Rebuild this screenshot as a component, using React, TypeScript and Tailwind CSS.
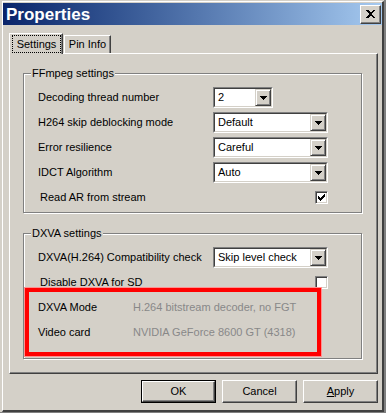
import React from "react";

function DropButton() {
  return (
    <div className="w-[16px] h-full flex items-center justify-center bg-[#d4d0c8] border border-t-[#d4d0c8] border-l-[#d4d0c8] border-r-[#404040] border-b-[#404040] shadow-[inset_1px_1px_0_#fff,inset_-1px_-1px_0_#808080]">
      <svg width="7" height="4" viewBox="0 0 7 4" shapeRendering="crispEdges">
        <rect x="0" y="0" width="7" height="1" fill="#000" />
        <rect x="1" y="1" width="5" height="1" fill="#000" />
        <rect x="2" y="2" width="3" height="1" fill="#000" />
        <rect x="3" y="3" width="1" height="1" fill="#000" />
      </svg>
    </div>
  );
}

function Combo({ value, w }: { value: string; w: string }) {
  return (
    <div className={`flex h-[21px] ${w} border border-t-[#808080] border-l-[#808080] border-r-white border-b-white`}>
      <div className="flex-1 flex bg-white border border-t-[#404040] border-l-[#404040] border-r-[#d4d0c8] border-b-[#d4d0c8]">
        <span className="flex-1 pl-[3px] leading-[17px] text-black">{value}</span>
        <DropButton />
      </div>
    </div>
  );
}

function Checkbox({ checked }: { checked?: boolean }) {
  return (
    <div className="w-[13px] h-[13px] bg-white border border-t-[#808080] border-l-[#808080] border-r-white border-b-white shadow-[inset_1px_1px_0_#404040,inset_-1px_-1px_0_#d4d0c8] flex items-center justify-center">
      {checked && (
        <svg width="7" height="7" viewBox="0 0 7 7" shapeRendering="crispEdges">
          <rect x="0" y="2" width="1" height="3" fill="#000" />
          <rect x="1" y="3" width="1" height="3" fill="#000" />
          <rect x="2" y="4" width="1" height="3" fill="#000" />
          <rect x="3" y="3" width="1" height="3" fill="#000" />
          <rect x="4" y="2" width="1" height="3" fill="#000" />
          <rect x="5" y="1" width="1" height="3" fill="#000" />
          <rect x="6" y="0" width="1" height="3" fill="#000" />
        </svg>
      )}
    </div>
  );
}

function Button({ children, def }: { children: React.ReactNode; def?: boolean }) {
  const inner = (
    <div className="w-full h-full flex items-center justify-center bg-[#d4d0c8] border border-t-white border-l-white border-r-[#404040] border-b-[#404040] shadow-[inset_-1px_-1px_0_#808080] text-black">
      {children}
    </div>
  );
  if (def) {
    return <div className="w-[75px] h-[23px] border border-black">{inner}</div>;
  }
  return <div className="w-[75px] h-[23px]">{inner}</div>;
}

function Row({ children }: { children: React.ReactNode }) {
  return <div className="flex items-center h-[25px] pl-[14px]">{children}</div>;
}

function Group({ title, h, children, extra }: { title: string; h: string; children: React.ReactNode; extra?: string }) {
  return (
    <div className={`relative w-[339px] ${h} ${extra ?? ""} pt-[11px] border border-[#808080] shadow-[inset_1px_1px_0_#fff,1px_1px_0_#fff]`}>
      <span className="absolute -top-[8px] left-[7px] px-[1px] bg-[#d4d0c8] leading-[14px] text-black">{title}</span>
      {children}
    </div>
  );
}

export default function App() {
  return (
    <div className="w-[386px] h-[413px] bg-[#d4d0c8] pl-[2px] pt-[1px] border-r-2 border-b border-r-[#808080] border-b-[#808080] flex flex-col overflow-hidden font-['Liberation_Sans',Arial,sans-serif] text-[11px] text-black">
      <div className="flex-1 flex flex-col border-l border-t border-r-2 border-b-2 border-l-white border-t-white border-r-[#404040] border-b-[#404040] pt-[1px]">
        {/* Title bar */}
        <div className="h-[22px] flex items-center justify-between pl-[3px] pr-[1px] bg-linear-to-r from-[#0a246a] to-[#a6caf0]">
          <span className="text-white font-bold text-[17px] leading-none">Properties</span>
          <div className="w-[21px] h-[19px] flex items-center justify-center bg-[#d4d0c8] border border-t-white border-l-white border-r-[#404040] border-b-[#404040] shadow-[inset_-1px_-1px_0_#808080]">
            <svg width="9" height="8" viewBox="0 0 9 8" shapeRendering="crispEdges">
              <path d="M0 0h2l2.5 2.5L7 0h2L5.5 4L9 8H7L4.5 5.5L2 8H0l3.5-4z" fill="#000" />
            </svg>
          </div>
        </div>

        {/* Body */}
        <div className="flex flex-col pl-[6px] pt-[8px]">
          {/* Tabs */}
          <div className="flex items-end h-[20px]">
            <div className="relative z-10 -mb-[1px] w-[54px] h-[21px] bg-[#d4d0c8] border-l border-t border-r border-l-white border-t-white border-r-[#404040] shadow-[inset_-1px_0_0_#808080] pl-[2px] pt-[1px]">
              <div className="w-[49px] h-[18px] border border-dotted border-black flex items-center justify-center leading-none">
                Settings
              </div>
            </div>
            <div className="w-[47px] h-[18px] ml-[1px] border-l border-t border-r border-l-white border-t-white border-r-[#404040] shadow-[inset_-1px_0_0_#808080] flex items-center justify-center leading-none">
              Pin Info
            </div>
          </div>

          {/* Panel */}
          <div className="w-[369px] h-[321px] border-l border-t border-r border-b border-l-white border-t-white border-r-[#404040] border-b-[#404040] shadow-[inset_-1px_-1px_0_#808080] pl-[13px] pt-[19px] flex flex-col">
            <Group title="FFmpeg settings" h="h-[140px]">
              <Row>
                <span className="w-[175px]">Decoding thread number</span>
                <Combo value="2" w="w-[60px]" />
              </Row>
              <Row>
                <span className="w-[175px]">H264 skip deblocking mode</span>
                <Combo value="Default" w="w-[115px]" />
              </Row>
              <Row>
                <span className="w-[175px]">Error resilience</span>
                <Combo value="Careful" w="w-[115px]" />
              </Row>
              <Row>
                <span className="w-[175px]">IDCT Algorithm</span>
                <Combo value="Auto" w="w-[115px]" />
              </Row>
              <Row>
                <span className="w-[175px] pl-[2px]">Read AR from stream</span>
                <div className="w-[115px] flex justify-end">
                  <Checkbox checked />
                </div>
              </Row>
            </Group>

            <Group title="DXVA settings" h="h-[126px]" extra="mt-[20px]">
              <Row>
                <span className="w-[175px]">DXVA(H.264) Compatibility check</span>
                <Combo value="Skip level check" w="w-[115px]" />
              </Row>
              <Row>
                <span className="w-[175px] pl-[2px]">Disable DXVA for SD</span>
                <div className="w-[115px] flex justify-end">
                  <Checkbox />
                </div>
              </Row>
              <Row>
                <span className="w-[95px]">DXVA Mode</span>
                <span className="text-[#888888]">H.264 bitstream decoder, no FGT</span>
              </Row>
              <Row>
                <span className="w-[95px]">Video card</span>
                <span className="text-[#888888]">NVIDIA GeForce 8600 GT (4318)</span>
              </Row>
              <div className="absolute top-[54px] left-[1px] w-[296px] h-[68px] border-4 border-[#ff0000] outline outline-[#ff9090]" />
            </Group>
          </div>

          {/* Buttons */}
          <div className="w-[369px] flex justify-end gap-[6px] mt-[6px]">
            <Button def>OK</Button>
            <Button>Cancel</Button>
            <Button>
              <span>
                <span className="underline">A</span>pply
              </span>
            </Button>
          </div>
        </div>
      </div>
    </div>
  );
}
